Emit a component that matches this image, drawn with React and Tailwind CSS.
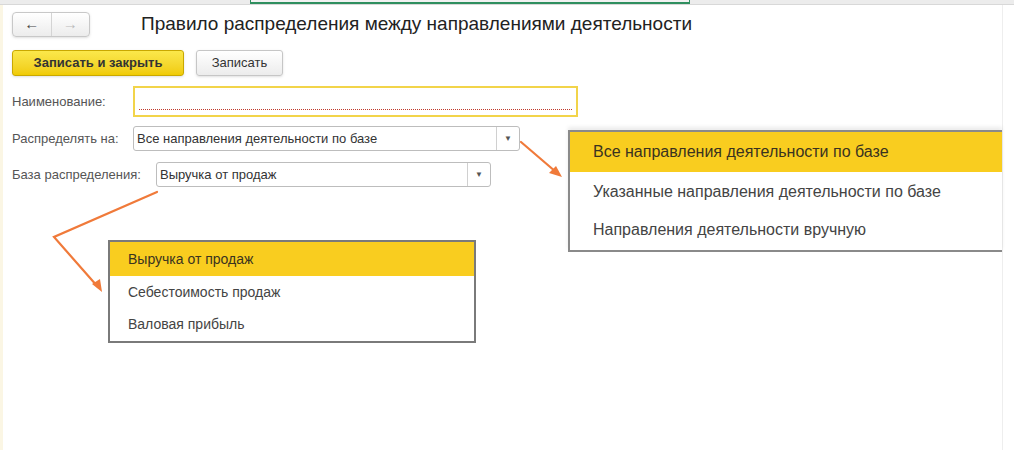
export default function App() {
  const font = { fontFamily: '"Liberation Sans", Arial, sans-serif' };
  return (
    <div className="relative w-[1014px] h-[450px] bg-white overflow-hidden text-[#333]" style={font}>
      <div className="flex h-[5px] bg-[#ececec] border-b border-[#d8d8d8]">
        <div className="ml-[250px] w-[440px] border-x border-b-2 border-[#2f8f5f] bg-[#f2f2f2]" />
      </div>
      <div className="absolute left-0 top-[5px] bottom-0 w-[3px] bg-[#fbf6e4]" />
      <div className="absolute right-0 top-[5px] bottom-0 w-[12px] bg-white border-l border-[#eee]" />

      <div className="pl-3 pt-[7px]">
        <div className="flex items-center h-[25px]">
          <div className="flex w-[78px] h-[25px] rounded border border-[#c8c8c8] bg-gradient-to-b from-white to-[#ececec] shadow-sm">
            <div className="flex-1 flex items-center justify-center border-r border-[#d4d4d4] text-[15px] font-bold text-[#444]">←</div>
            <div className="flex-1 flex items-center justify-center text-[15px] font-bold text-[#bbb]">→</div>
          </div>
          <div className="ml-[51px] text-[19px] text-[#222]">Правило распределения между направлениями деятельности</div>
        </div>

        <div className="flex gap-3 mt-[13px]">
          <button className="w-[172px] h-[26px] rounded-[3px] border border-[#c9a800] bg-gradient-to-b from-[#fbe84a] to-[#f0cb00] text-[13px] font-bold text-[#333] shadow-sm">Записать и закрыть</button>
          <button className="w-[87px] h-[26px] rounded-[3px] border border-[#c6c6c6] bg-gradient-to-b from-white to-[#ececec] text-[13px] text-[#333] shadow-sm">Записать</button>
        </div>

        <div className="flex items-center mt-[10px] h-[31px]">
          <span className="w-[121px] text-[13px] text-[#555]">Наименование:</span>
          <div className="w-[445px] h-[31px] border-2 border-[#f2d44a] bg-white px-[4px] flex items-end pb-[5px]">
            <div className="w-full border-b border-dotted border-[#c0392b]" />
          </div>
        </div>

        <div className="flex items-center mt-[9px] h-[25px]">
          <span className="w-[121px] text-[13px] text-[#555]">Распределять на:</span>
          <div className="flex w-[387px] h-[25px] border border-[#bdbdbd] rounded-[3px] bg-white">
            <span className="flex-1 text-[13px] leading-[23px] pl-[3px] text-[#333]">Все направления деятельности по базе</span>
            <span className="w-[23px] border-l border-[#d0d0d0] flex items-center justify-center text-[8px] text-[#555]">▼</span>
          </div>
        </div>

        <div className="flex items-center mt-[11px] h-[25px]">
          <span className="w-[144px] text-[13px] text-[#555]">База распределения:</span>
          <div className="flex w-[335px] h-[25px] border border-[#bdbdbd] rounded-[3px] bg-white">
            <span className="flex-1 text-[13px] leading-[23px] pl-[3px] text-[#333]">Выручка от продаж</span>
            <span className="w-[23px] border-l border-[#d0d0d0] flex items-center justify-center text-[8px] text-[#555]">▼</span>
          </div>
        </div>
      </div>

      <svg className="absolute left-0 top-0" width="1014" height="450">
        <g stroke="#f07a3a" strokeWidth="2.2" fill="none" strokeLinecap="round">
          <path d="M521 142 L556 172" />
          <path d="M157 192 L54 237 L98 287" />
        </g>
        <path d="M562 177 L549 173 L556 166 Z" fill="#f07a3a" />
        <path d="M102 292 L92 284 L100 279 Z" fill="#f07a3a" />
      </svg>

      <div className="absolute left-[568px] top-[130px] w-[434px] border-2 border-[#8a8a8a] border-r-0 bg-white text-[16px] text-[#444] shadow-[0_-3px_4px_rgba(0,0,0,0.08)]">
        <div className="h-[40px] bg-[#f9cd1f] pl-[23px] leading-[40px] text-[#3a3320]">Все направления деятельности по базе</div>
        <div className="h-[40px] pl-[23px] leading-[40px]">Указанные направления деятельности по базе</div>
        <div className="h-[38px] pl-[23px] leading-[36px]">Направления деятельности вручную</div>
      </div>

      <div className="absolute left-[108px] top-[240px] w-[368px] border-2 border-[#7a7a7a] bg-white text-[14px] text-[#444]">
        <div className="h-[34px] bg-[#f9cd1f] pl-[18px] leading-[34px] text-[#3a3320]">Выручка от продаж</div>
        <div className="h-[33px] pl-[18px] leading-[33px]">Себестоимость продаж</div>
        <div className="h-[32px] pl-[18px] leading-[30px]">Валовая прибыль</div>
      </div>
    </div>
  );
}
